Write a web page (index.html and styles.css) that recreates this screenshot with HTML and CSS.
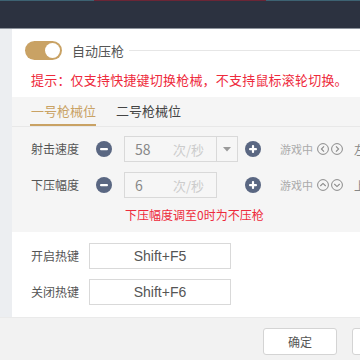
FILE: index.html
```html
<!DOCTYPE html>
<html lang="zh">
<head>
<meta charset="utf-8">
<link rel="stylesheet" href="styles.css">
</head>
<body>
<div class="topline"></div>
<div class="header"></div>
<div class="main">
  <div class="side"></div>
  <div class="content">
    <div class="sec1">
      <div class="legend">
        <div class="toggle"><span class="knob"></span></div>
        <span class="legend-text">自动压枪</span>
        <span class="legend-line"></span>
      </div>
      <div class="tip">提示：仅支持快捷键切换枪械，不支持鼠标滚轮切换。</div>
    </div>
    <div class="panel">
      <div class="tabs">
        <span class="tab active">一号枪械位</span>
        <span class="tab">二号枪械位</span>
      </div>
      <div class="row">
        <span class="label">射击速度</span>
        <span class="circ"><svg width="16" height="16" viewBox="0 0 16 16"><circle cx="8" cy="8" r="8" fill="#5a6782"/><rect x="4" y="7" width="8" height="2.2" rx="1" fill="#fff"/></svg></span>
        <div class="inwrap">
          <div class="input sel"><span class="val">58</span><span class="unit">次/秒</span><span class="drop"><svg width="8" height="5" viewBox="0 0 8 5"><path d="M0 0h8L4 4.5z" fill="#9a9a9a"/></svg></span></div>
        </div>
        <span class="circ"><svg width="16" height="16" viewBox="0 0 16 16"><circle cx="8" cy="8" r="8" fill="#5a6782"/><rect x="4" y="7" width="8" height="2.2" rx="1" fill="#fff"/><rect x="6.9" y="4" width="2.2" height="8" rx="1" fill="#fff"/></svg></span>
        <span class="game">游戏中</span>
        <span class="ico"><svg width="12" height="12" viewBox="0 0 12 12"><circle cx="6" cy="6" r="5.4" fill="none" stroke="#8a8a8a" stroke-width="1"/><path d="M7 3.3L4.4 6 7 8.7" fill="none" stroke="#8a8a8a" stroke-width="1.1"/></svg></span>
        <span class="ico"><svg width="12" height="12" viewBox="0 0 12 12"><circle cx="6" cy="6" r="5.4" fill="none" stroke="#8a8a8a" stroke-width="1"/><path d="M5 3.3L7.6 6 5 8.7" fill="none" stroke="#8a8a8a" stroke-width="1.1"/></svg></span>
        <span class="dir">左</span>
      </div>
      <div class="row">
        <span class="label">下压幅度</span>
        <span class="circ"><svg width="16" height="16" viewBox="0 0 16 16"><circle cx="8" cy="8" r="8" fill="#5a6782"/><rect x="4" y="7" width="8" height="2.2" rx="1" fill="#fff"/></svg></span>
        <div class="inwrap">
          <div class="input short"><span class="val">6</span><span class="unit">次/秒</span></div>
        </div>
        <span class="circ"><svg width="16" height="16" viewBox="0 0 16 16"><circle cx="8" cy="8" r="8" fill="#5a6782"/><rect x="4" y="7" width="8" height="2.2" rx="1" fill="#fff"/><rect x="6.9" y="4" width="2.2" height="8" rx="1" fill="#fff"/></svg></span>
        <span class="game">游戏中</span>
        <span class="ico"><svg width="12" height="12" viewBox="0 0 12 12"><circle cx="6" cy="6" r="5.4" fill="none" stroke="#8a8a8a" stroke-width="1"/><path d="M3.3 7L6 4.4 8.7 7" fill="none" stroke="#8a8a8a" stroke-width="1.1"/></svg></span>
        <span class="ico"><svg width="12" height="12" viewBox="0 0 12 12"><circle cx="6" cy="6" r="5.4" fill="none" stroke="#8a8a8a" stroke-width="1"/><path d="M3.3 5L6 7.6 8.7 5" fill="none" stroke="#8a8a8a" stroke-width="1.1"/></svg></span>
        <span class="dir">上</span>
      </div>
      <div class="note">下压幅度调至0时为不压枪</div>
    </div>
    <div class="hot">
      <div class="hrow"><span class="label">开启热键</span><div class="hbox">Shift+F5</div></div>
      <div class="hrow"><span class="label">关闭热键</span><div class="hbox">Shift+F6</div></div>
    </div>
  </div>
</div>
<div class="footer">
  <button class="btn">确定</button>
  <button class="btn"></button>
</div>
</body>
</html>
```
FILE: styles.css
```css
html, body {
  margin: 0;
  padding: 0;
}
body {
  width: 360px;
  height: 360px;
  overflow: hidden;
  font-family: "Noto Sans CJK SC", "Noto Sans", sans-serif;
  background: #f2f2f2;
  color: #555;
}
.topline {
  height: 1px;
  background: linear-gradient(90deg, #3d6272 0, #3d6272 26%, #6b2636 26%, #6b2636 74%, #3d6272 74%);
}
.header {
  height: 27px;
  background: #2c3240;
  border-bottom: 1px solid #8d939c;
}
.main {
  display: flex;
  height: 288px;
}
.side {
  flex: none;
  width: 12px;
  background: #eceef1;
}
.content {
  flex: 1;
  min-width: 0;
  overflow: hidden;
  display: flex;
  flex-direction: column;
}
.sec1 {
  height: 68px;
  background: #fff;
  box-sizing: border-box;
  padding-top: 12px;
}
.legend {
  display: flex;
  align-items: center;
  height: 19px;
  padding-left: 13px;
}
.toggle {
  flex: none;
  width: 37px;
  height: 19px;
  border-radius: 10px;
  background: #c9a264;
  position: relative;
}
.knob {
  position: absolute;
  right: 2px;
  top: 2px;
  width: 15px;
  height: 15px;
  border-radius: 50%;
  background: #fff;
}
.legend-text {
  margin-left: 10px;
  font-size: 13px;
  line-height: 19px;
  color: #555;
}
.legend-line {
  flex: 1;
  height: 1px;
  background: #e6e6e6;
  margin-left: 5px;
  margin-top: -1px;
}
.tip {
  margin-top: 11px;
  padding-left: 19px;
  font-size: 13px;
  line-height: 18px;
  letter-spacing: 0.2px;
  color: #ee2a3c;
  white-space: nowrap;
}
.panel {
  height: 135px;
  background: #f5f5f5;
  box-sizing: border-box;
}
.tabs {
  display: flex;
  height: 29px;
  padding-left: 18px;
  border-bottom: 1px solid #e8e8e8;
  gap: 19px;
}
.tab {
  font-size: 13px;
  line-height: 25px;
  padding-top: 1px;
  color: #444;
  border-bottom: 2px solid transparent;
  padding-left: 1px;
}
.tab.active {
  color: #c9a264;
  border-bottom-color: #c9a264;
}
.row {
  display: flex;
  align-items: center;
  height: 26px;
  margin-top: 9px;
  padding-left: 19px;
  white-space: nowrap;
}
.row + .row {
  margin-top: 10px;
}
.row > * {
  flex: none;
}
.label {
  flex: none;
  width: 65px;
  font-size: 12px;
  line-height: 16px;
  color: #555;
}
.circ {
  width: 16px;
  height: 16px;
  display: flex;
}
.inwrap {
  width: 121px;
  margin-left: 12px;
}
.input {
  height: 26px;
  box-sizing: border-box;
  border: 1px solid #d9d9d9;
  background: #f6f6f6;
  display: flex;
  align-items: center;
  padding-left: 10px;
}
.input.sel {
  width: 114px;
}
.input.short {
  width: 93px;
}
.val {
  font-size: 14px;
  color: #888;
  width: 38px;
}
.unit {
  font-size: 13px;
  color: #cccccc;
}
.drop {
  margin-left: auto;
  width: 20px;
  height: 24px;
  border-left: 1px solid #d9d9d9;
  display: flex;
  align-items: center;
  justify-content: center;
}
.game {
  margin-left: 19px;
  font-size: 11px;
  color: #aaa;
  margin-right: 4px;
}
.ico {
  display: flex;
  margin-right: 2px;
}
.dir {
  margin-left: 9px;
  font-size: 12px;
  color: #888;
}
.note {
  margin-top: 9px;
  padding-left: 113px;
  font-size: 12px;
  line-height: 16px;
  color: #ee2a3c;
}
.hot {
  height: 85px;
  background: #fff;
  box-sizing: border-box;
  padding-top: 11px;
}
.hrow {
  display: flex;
  align-items: center;
  padding-left: 19px;
  height: 26px;
}
.hrow + .hrow {
  margin-top: 10px;
}
.hrow .label {
  width: 58px;
}
.hbox {
  flex: none;
  width: 142px;
  height: 26px;
  box-sizing: border-box;
  border: 1px solid #d9d9d9;
  background: #fff;
  font-family: "Liberation Sans", "Noto Sans", sans-serif;
  font-size: 14px;
  line-height: 24px;
  text-align: center;
  color: #555;
}
.footer {
  height: 43px;
  background: #f2f2f2;
  display: flex;
  align-items: flex-start;
  padding-left: 263px;
  padding-top: 10px;
  box-sizing: border-box;
  gap: 15px;
  white-space: nowrap;
  overflow: hidden;
  border-top: 1px solid #eaeaea;
}
.btn {
  flex: none;
  width: 74px;
  height: 27px;
  border: 1px solid #d4d4d4;
  border-radius: 3px;
  background: #fff;
  font-family: "Noto Sans CJK SC", sans-serif;
  font-size: 12px;
  color: #555;
  padding: 0;
}
```
